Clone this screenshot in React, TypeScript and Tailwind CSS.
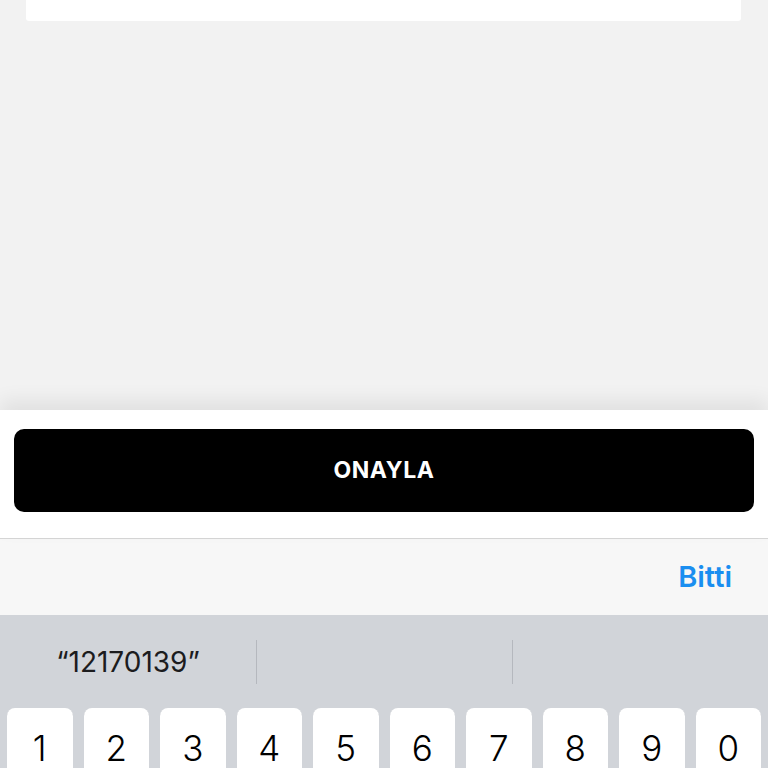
const digits = ['1', '2', '3', '4', '5', '6', '7', '8', '9', '0'];

export default function App() {
  return (
    <div
      className="h-[768px] w-[768px] overflow-hidden flex flex-col bg-[#f2f2f2]"
      style={{ fontFamily: 'Inter, "Noto Sans", sans-serif' }}
    >
      {/* scrollable form area */}
      <div className="h-[410px] shrink-0 bg-[#f2f2f2]">
        <div className="ml-[26px] w-[715px] h-[21px] bg-white rounded-b-[3px]" />
      </div>

      {/* bottom action panel */}
      <div className="h-[128px] shrink-0 bg-white px-[14px] pt-[19px] shadow-[0_-10px_18px_rgba(0,0,0,0.07)] relative">
        <button className="w-full h-[83px] rounded-[10px] bg-black text-white text-[23px] font-bold tracking-[0.6px]">
          ONAYLA
        </button>
      </div>

      {/* keyboard accessory bar */}
      <div className="h-[77px] shrink-0 bg-[#f7f7f7] border-t border-[#d6d6d6] flex items-center justify-end pr-[36px]">
        <span className="text-[29px] font-semibold text-[#1a8ef0]">Bitti</span>
      </div>

      {/* keyboard */}
      <div className="flex-1 bg-[#d1d4d9]">
        <div className="h-[93px] grid grid-cols-3 items-center">
          <div className="h-[44px] flex items-center justify-center text-[28px] text-[#1c1c1e]">
            “12170139”
          </div>
          <div className="h-[44px] border-l border-[#b5b8be]" />
          <div className="h-[44px] border-l border-[#b5b8be]" />
        </div>
        <div className="flex gap-[11px] px-[7px]">
          {digits.map((d) => (
            <div
              key={d}
              className="flex-1 h-[86px] bg-white rounded-[8px] shadow-[0_1px_0_#888b90] flex justify-center pt-[14px] text-[35px] font-light text-black"
            >
              {d}
            </div>
          ))}
        </div>
      </div>
    </div>
  );
}
